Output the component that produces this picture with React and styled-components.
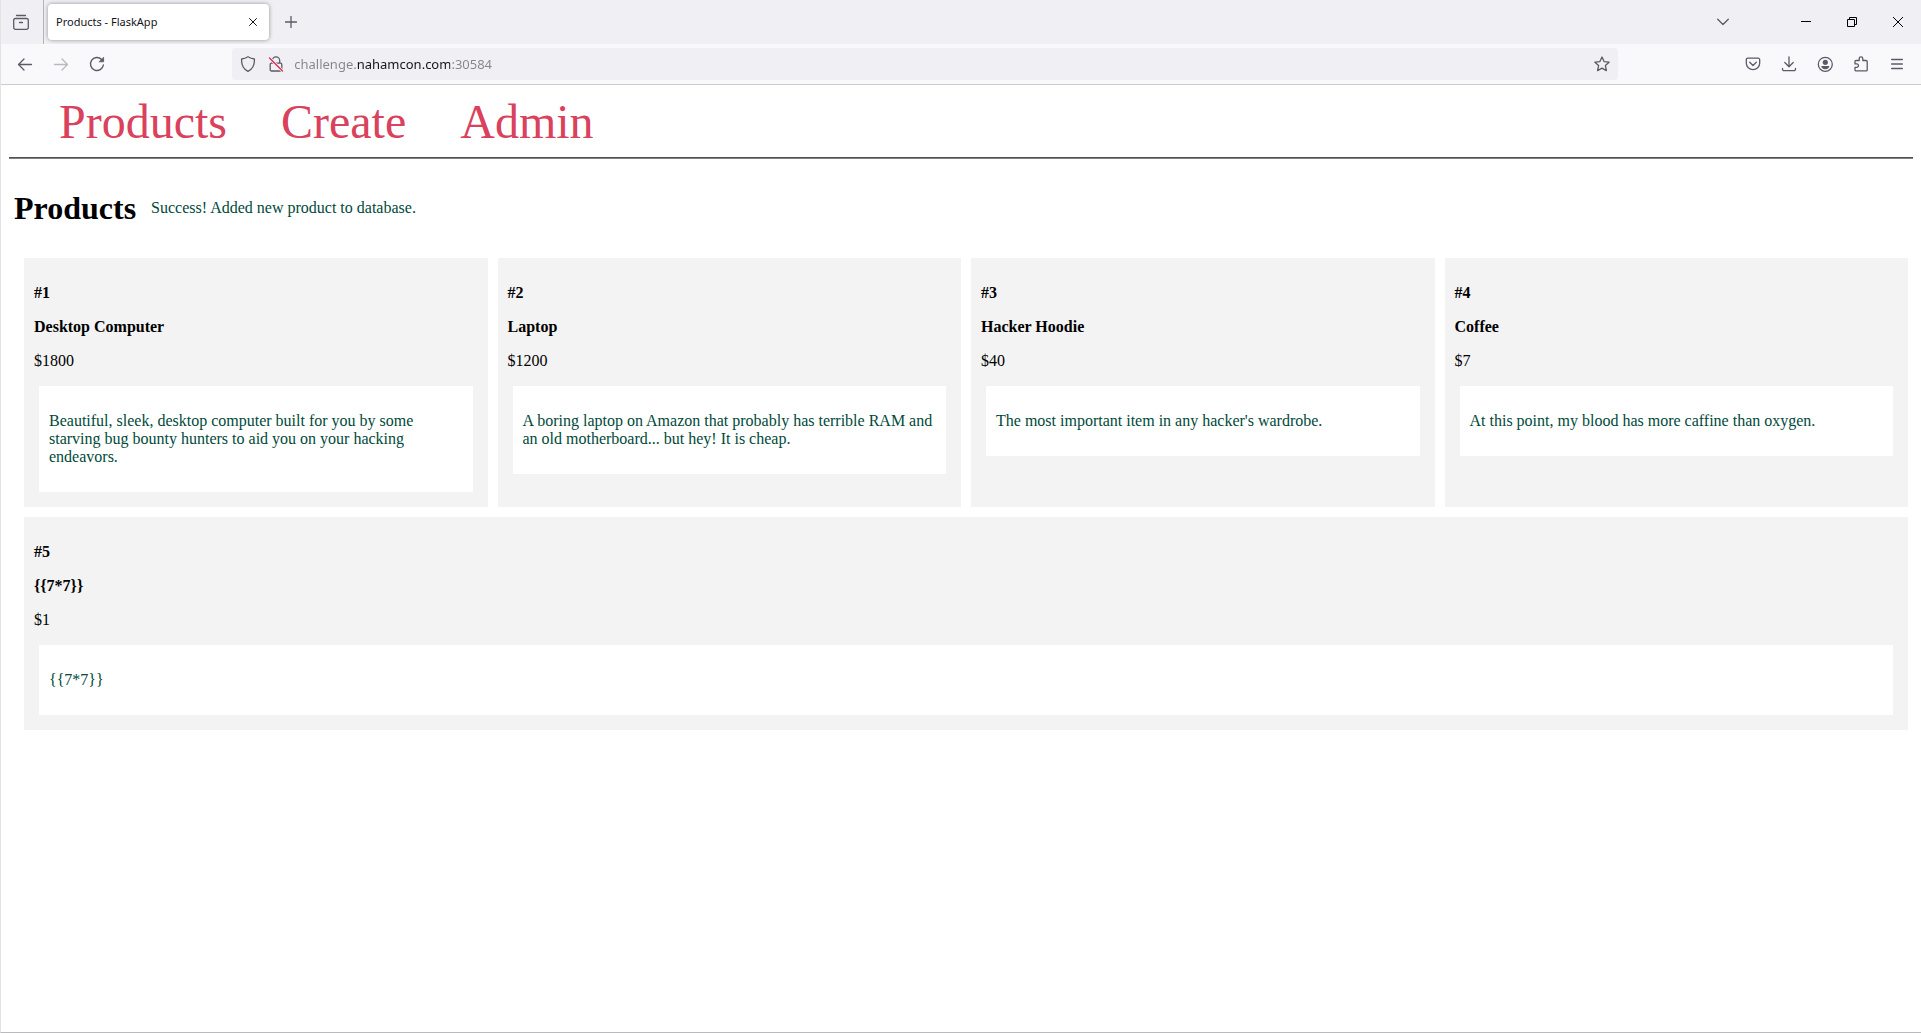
import React, { useState } from "react";
import styled, { createGlobalStyle } from "styled-components";

const GlobalStyle = createGlobalStyle`
  *, *::before, *::after { box-sizing: border-box; }
  html, body, #root { height: 100%; }
  body { margin: 0; background: #fff; }
`;

const Browser = styled.div`
  display: flex;
  flex-direction: column;
  min-height: 100%;
  border-left: 1px solid #e3e3e6;
  border-bottom: 1px solid #b9b9be;
  font-family: "Noto Sans", "Open Sans", sans-serif;
  color: #5b5b66;
`;

const TabStrip = styled.header`
  display: flex;
  align-items: center;
  height: 44px;
  background: #f0eff4;
`;

const ViewCell = styled.div`
  display: flex;
  align-self: stretch;
  padding-left: 2px;
  width: 43px;
  border-right: 1px solid #b4b4bb;
`;

const IconButton = styled.button`
  display: flex;
  align-items: center;
  justify-content: center;
  flex: none;
  width: ${(p) => p.$width || 36}px;
  height: ${(p) => p.$height || 32}px;
  padding: 0;
  border: 0;
  border-radius: 4px;
  background: none;
  color: ${(p) => p.$color || "#5b5b66"};
  &:disabled { opacity: 0.4; }
`;

const Tab = styled.div`
  display: flex;
  align-items: center;
  justify-content: space-between;
  width: 221px;
  height: 36px;
  margin-left: 4px;
  padding: 0 4px 0 8px;
  border-radius: 4px;
  background: #fff;
  box-shadow: 0 0 4px rgba(0, 0, 0, 0.4);
`;

const TabTitle = styled.span`
  font-size: 11px;
  line-height: 16px;
  color: #15141a;
`;

const WindowControls = styled.div`
  display: flex;
  align-items: center;
  margin-left: auto;
`;

const ListTabs = styled.div`
  margin-right: 42px;
`;

const Toolbar = styled.div`
  display: flex;
  align-items: center;
  height: 41px;
  padding: 0 6px;
  background: #f9f9fb;
  border-bottom: 1px solid #ccccd0;
`;

const ButtonGroup = styled.div`
  display: flex;
`;

const AddressBar = styled.form`
  display: flex;
  align-items: center;
  flex: 1;
  height: 32px;
  margin: 0 calc(6vw + 2px);
  padding: 0 2px;
  border-radius: 4px;
  background: #f0eff4;
`;

const AddressInput = styled.input`
  flex: 1;
  min-width: 0;
  height: 24px;
  margin-left: 4px;
  padding: 0;
  border: 0;
  outline: 0;
  font-family: "Noto Sans", "Open Sans", sans-serif;
  font-size: 13px;
  color: transparent;
  background: linear-gradient(to right, #85858c 63px, #15141a 63px 156px, #85858c 156px);
  background-clip: text;
  -webkit-background-clip: text;
`;

const Page = styled.div`
  flex: 1;
  padding: 8px;
  font-family: "Liberation Serif", "Times New Roman", serif;
  font-size: 16px;
  line-height: 18px;
  color: #000;
`;

const SiteNav = styled.nav`
  display: flex;
  gap: 54px;
  padding: 1px 50px 8px;
`;

const NavLink = styled.a`
  font-size: 48px;
  line-height: 55px;
  color: #d9415d;
  text-decoration: none;
`;

const Rule = styled.hr`
  margin: 0;
  border: 0;
  border-top: 1px solid #505050;
  border-bottom: 1px solid #808080;
`;

const TitleRow = styled.div`
  display: flex;
  align-items: center;
  gap: 15px;
  margin: 31px 5px 32px;
`;

const Title = styled.h1`
  margin: 0;
  font-size: 32px;
  line-height: 36px;
`;

const Flash = styled.p`
  margin: 0;
  color: #00493a;
`;

const Catalog = styled.main`
  display: flex;
  flex-wrap: wrap;
  gap: 10px;
  padding: 0 5px 0 15px;
`;

const Card = styled.article`
  flex: 1 1 400px;
  padding: 10px 10px 15px;
  background: #f3f3f3;
`;

const CardLine = styled.p`
  margin: 16px 0;
  font-weight: ${(p) => (p.$strong ? 700 : 400)};
`;

const Description = styled.div`
  margin: 0 5px;
  padding: 26px 10px;
  background: #fff;
  color: #00493a;
`;

const Svg = ({ size = 16, children, ...rest }) => (
  <svg width={size} height={size} viewBox={`0 0 ${size} ${size}`} fill="none" stroke="currentColor"
    strokeWidth="1.3" strokeLinecap="round" strokeLinejoin="round" aria-hidden="true" {...rest}>
    {children}
  </svg>
);

const products = [
  { id: 1, name: "Desktop Computer", price: 1800, text: "Beautiful, sleek, desktop computer built for you by some starving bug bounty hunters to aid you on your hacking endeavors." },
  { id: 2, name: "Laptop", price: 1200, text: "A boring laptop on Amazon that probably has terrible RAM and an old motherboard... but hey! It is cheap." },
  { id: 3, name: "Hacker Hoodie", price: 40, text: "The most important item in any hacker's wardrobe." },
  { id: 4, name: "Coffee", price: 7, text: "At this point, my blood has more caffine than oxygen." },
  { id: 5, name: "{{7*7}}", price: 1, text: "{{7*7}}" },
];

function BrowserChrome() {
  const [url, setUrl] = useState("challenge.nahamcon.com:30584");
  return (
    <>
      <TabStrip>
        <ViewCell>
          <IconButton $height={44} aria-label="View">
            <Svg><path d="M3.500 1.500h9M2.200 4.500h11.600a1.500 1.500 0 0 1 1.500 1.500v7.500a1.800 1.800 0 0 1-1.800 1.800h-11a1.800 1.800 0 0 1-1.800-1.800V6a1.500 1.500 0 0 1 1.500-1.500zM6.500 8.500h3" /></Svg>
          </IconButton>
        </ViewCell>
        <Tab>
          <TabTitle>Products - FlaskApp</TabTitle>
          <IconButton $width={24} $height={24} $color="#15141a" aria-label="Close tab">
            <Svg size={8} strokeWidth="1"><path d="M.5.5l7 7M7.500.5l-7 7" /></Svg>
          </IconButton>
        </Tab>
        <IconButton $width={44} aria-label="New tab">
          <Svg size={12}><path d="M6 .5v11M.5 6h11" /></Svg>
        </IconButton>
        <WindowControls>
          <ListTabs>
            <IconButton aria-label="List all tabs">
              <Svg size={12}><path d="M.7 3.200L6 8.500l5.300-5.300" /></Svg>
            </IconButton>
          </ListTabs>
          <IconButton $width={46} $color="#000" aria-label="Minimize">
            <Svg size={10} strokeWidth="1" strokeLinecap="butt"><path d="M0 4.500h10" /></Svg>
          </IconButton>
          <IconButton $width={46} $color="#000" aria-label="Restore">
            <Svg size={10} strokeWidth="1" strokeLinecap="butt" strokeLinejoin="miter"><path d="M.5 2.500h7v7h-7zM2.500 2V.5h7v7H8" /></Svg>
          </IconButton>
          <IconButton $width={46} $color="#000" aria-label="Close window">
            <Svg size={10} strokeWidth="1"><path d="M.3.3l9.400 9.400M9.700.3L.3 9.700" /></Svg>
          </IconButton>
        </WindowControls>
      </TabStrip>
      <Toolbar>
        <ButtonGroup>
          <IconButton aria-label="Back">
            <Svg strokeWidth="1.3"><path d="M14.500 8.500H1.700M7 3L1.500 8.500 7 14" /></Svg>
          </IconButton>
          <IconButton aria-label="Forward" disabled>
            <Svg strokeWidth="1.3"><path d="M1.500 8.500h12.800M9 3l5.500 5.500L9 14" /></Svg>
          </IconButton>
          <IconButton aria-label="Reload">
            <Svg strokeWidth="1.4"><path d="M14.400 9A6.500 6.500 0 1 1 12.600 3.400" /><path d="M14.600 1.600v4.200h-4.200z" fill="currentColor" strokeWidth=".8" /></Svg>
          </IconButton>
        </ButtonGroup>
        <AddressBar onSubmit={(e) => e.preventDefault()}>
          <IconButton type="button" $width={28} aria-label="Tracking protection">
            <Svg><path d="M8 .8c2 1.200 4 1.900 6.400 2.200.3 5.300-1.400 9.800-6.400 12.300C3 12.800 1.300 8.300 1.600 3 4 2.700 6 2 8 .8z" /></Svg>
          </IconButton>
          <IconButton type="button" $width={28} aria-label="Connection not secure">
            <Svg>
              <path d="M4.300 7V4.500a3.700 3.700 0 0 1 7.400 0V7M3.500 7.200h9a1.300 1.300 0 0 1 1.300 1.300v5.200a1.300 1.300 0 0 1-1.300 1.300h-9a1.300 1.300 0 0 1-1.300-1.300V8.500a1.300 1.300 0 0 1 1.300-1.300z" />
              <path d="M1.500 2l13 13" stroke="#f0eff4" strokeWidth="3" />
              <path d="M1.500 2l13 13" stroke="#e22850" />
            </Svg>
          </IconButton>
          <AddressInput aria-label="Address" value={url} onChange={(e) => setUrl(e.target.value)} spellCheck={false} />
          <IconButton type="button" $width={28} aria-label="Bookmark this page">
            <Svg><path d="M8 1l2.100 4.600 5 .6-3.700 3.400 1 5L8 12.100l-4.400 2.500 1-5L.9 6.200l5-.6z" /></Svg>
          </IconButton>
        </AddressBar>
        <ButtonGroup>
          <IconButton aria-label="Save to Pocket">
            <Svg><path d="M2.700 2.200h10.600a1.400 1.400 0 0 1 1.400 1.400v3.700a6.700 6.300 0 0 1-13.400 0V3.600a1.400 1.400 0 0 1 1.400-1.400zM4.700 6.300L8 9.500l3.300-3.200" /></Svg>
          </IconButton>
          <IconButton aria-label="Downloads">
            <Svg><path d="M8 .8v9.700M3.800 6.500L8 10.700l4.200-4.200M1.500 12.500v.7a1.500 1.500 0 0 0 1.500 1.500h10a1.500 1.500 0 0 0 1.500-1.500v-.7" /></Svg>
          </IconButton>
          <IconButton aria-label="Account">
            <Svg><circle cx="8.300" cy="8.300" r="7" /><circle cx="8.300" cy="6.300" r="2.600" fill="currentColor" stroke="none" /><path d="M4.300 10.100h8c0 1.600-1.500 3.200-4 3.200s-4-1.600-4-3.200z" fill="currentColor" stroke="none" /></Svg>
          </IconButton>
          <IconButton aria-label="Extensions">
            <Svg><path d="M6.200 4.500V2.600a1.800 1.800 0 0 1 3.600 0v1.900h3.400a1 1 0 0 1 1 1v8.400a1 1 0 0 1-1 1H3a1 1 0 0 1-1-1v-2.600h1.800a1.700 1.700 0 0 0 0-3.400H2V5.500a1 1 0 0 1 1-1z" /></Svg>
          </IconButton>
          <IconButton aria-label="Menu">
            <Svg size={12}><path d="M.6 1.500h10.800M.6 6h10.800M.6 10.500h10.800" /></Svg>
          </IconButton>
        </ButtonGroup>
      </Toolbar>
    </>
  );
}

export default function App() {
  return (
    <Browser>
      <GlobalStyle />
      <BrowserChrome />
      <Page>
        <SiteNav>
          <NavLink href="#products">Products</NavLink>
          <NavLink href="#create">Create</NavLink>
          <NavLink href="#admin">Admin</NavLink>
        </SiteNav>
        <Rule />
        <TitleRow>
          <Title>Products</Title>
          <Flash>Success! Added new product to database.</Flash>
        </TitleRow>
        <Catalog>
          {products.map((product) => (
            <Card key={product.id}>
              <CardLine $strong>#{product.id}</CardLine>
              <CardLine $strong>{product.name}</CardLine>
              <CardLine>${product.price}</CardLine>
              <Description>{product.text}</Description>
            </Card>
          ))}
        </Catalog>
      </Page>
    </Browser>
  );
}
